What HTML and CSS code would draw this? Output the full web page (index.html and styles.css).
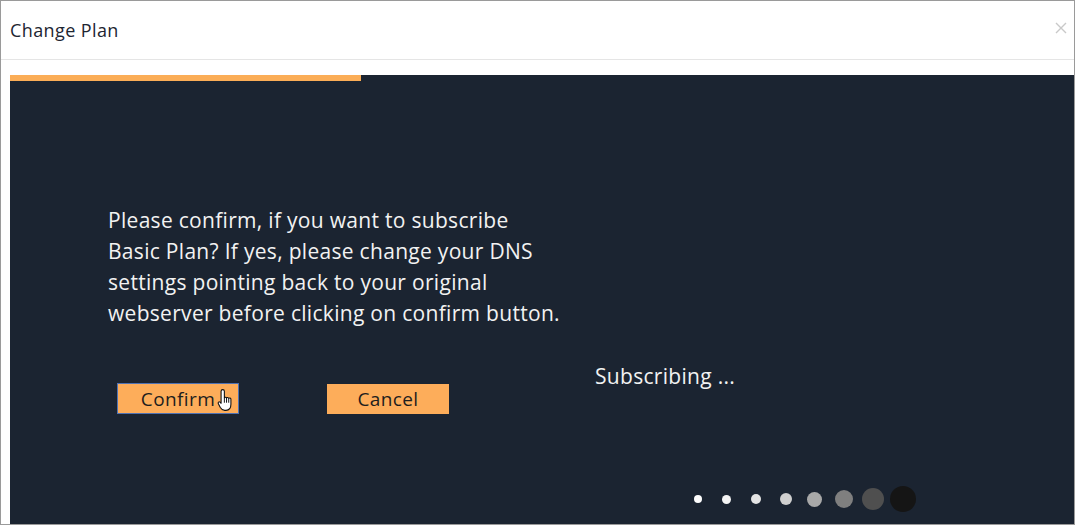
FILE: index.html
```html
<!DOCTYPE html>
<html lang="en">
  <head>
    <meta charset="UTF-8" />
    <meta name="viewport" content="width=device-width, initial-scale=1.0" />
    <title>Change Plan</title>
    <link rel="stylesheet" href="styles.css">
  </head>
  <body>
    <div class="modal">
      <header class="modal-header">
        <h4>Change Plan</h4>
        <button class="close" aria-label="Close">
          <svg width="12" height="12" viewBox="0 0 12 12">
            <path d="M1 1 L11 11 M11 1 L1 11" stroke="#c9c9c9" stroke-width="1.4" fill="none" />
          </svg>
        </button>
      </header>

      <div class="modal-body">
        <section class="panel">
          <div class="progress"></div>

          <div class="panel-content">
            <div class="message">
              <p>Please confirm, if you want to subscribe<br>
                Basic Plan? If yes, please change your DNS<br>
                settings pointing back to your original<br>
                webserver before clicking on confirm button.</p>

              <div class="actions">
                <button class="btn focused">
                  Confirm
                  <svg class="cursor" width="18" height="24" viewBox="0 0 16 22">
                    <path d="M5 1.5 C5.8 1.5 6.5 2.1 6.5 3 L6.5 9 C6.7 8.2 8.3 8.2 8.5 9.2 C8.8 8.4 10.3 8.4 10.5 9.6 C10.9 8.9 12.5 9.1 12.5 10.3 L12.5 15 C12.5 18 11 20.5 8 20.5 L6.8 20.5 C4.8 20.5 3.9 19.6 2.8 17.8 L0.9 14.2 C0.4 13.2 1.6 12.1 2.5 13 L3.5 14 L3.5 3 C3.5 2.1 4.2 1.5 5 1.5 Z" fill="#fff" stroke="#111" stroke-width="1" stroke-linejoin="round" />
                    <path d="M6.5 9 L6.5 13.5 M8.5 9.2 L8.5 13.5 M10.5 9.6 L10.5 13.5" stroke="#111" stroke-width="0.9" fill="none" />
                  </svg>
                </button>
                <button class="btn">Cancel</button>
              </div>
            </div>

            <div class="status">
              <p>Subscribing ...</p>

              <ul class="loader">
                <li><span class="dot d1"></span></li>
                <li><span class="dot d2"></span></li>
                <li><span class="dot d3"></span></li>
                <li><span class="dot d4"></span></li>
                <li><span class="dot d5"></span></li>
                <li><span class="dot d6"></span></li>
                <li><span class="dot d7"></span></li>
                <li><span class="dot d8"></span></li>
              </ul>
            </div>
          </div>
        </section>
      </div>
    </div>
  </body>
</html>
```

FILE: styles.css
```css
body {
  margin: 0;
  font-family: "Open Sans", Lato, sans-serif;
  background: #fff;
}

.modal {
  height: 525px;
  box-sizing: border-box;
  border: 1px solid #9a9a9a;
  display: flex;
  flex-direction: column;
}

.modal-header {
  height: 58px;
  border-bottom: 1px solid #e5e5e5;
  display: flex;
  align-items: center;
  justify-content: space-between;
  padding: 0 7px 0 9px;

  h4 {
    margin: 0;
    font-size: 18px;
    font-weight: 400;
    letter-spacing: 0.4px;
    color: #1d2532;
  }

  .close {
    border: 0;
    background: none;
    padding: 0;
    margin-top: -4px;
    display: flex;
  }
}

.modal-body {
  flex: 1;
  display: flex;
  padding: 15px 0 0 9px;
}

.panel {
  flex: 1;
  background: #1b2431;
  display: flex;
  flex-direction: column;
}

.progress {
  width: 351px;
  height: 6px;
  background: #fbad56;
}

.panel-content {
  display: flex;
  padding-left: 98px;
}

.message {
  width: 487px;
  padding-top: 124px;

  p {
    margin: 0;
    white-space: nowrap;
    font-size: 21px;
    letter-spacing: 0.3px;
    line-height: 31px;
    color: #f2f2f2;
  }
}

.actions {
  display: flex;
  align-items: flex-start;
  margin-top: 54px;
  padding-left: 9px;
}

.btn {
  position: relative;
  width: 122px;
  height: 30px;
  border: 0;
  padding: 0;
  background: #fdad5a;
  color: #1e1e1e;
  font-family: inherit;
  font-size: 19px;
  letter-spacing: 0.4px;

  &.focused {
    height: 31px;
    border: 1px solid #4f72b3;
  }

  & + .btn {
    margin-left: 88px;
    margin-top: 1px;
  }

  .cursor {
    position: absolute;
    left: 99px;
    top: 4px;
  }
}

.status {
  padding-top: 281px;

  p {
    margin: 0;
    font-size: 21px;
    letter-spacing: 0.3px;
    line-height: 28px;
    color: #f2f2f2;
  }
}

.loader {
  display: flex;
  align-items: center;
  list-style: none;
  padding: 0;
  margin: 96px 0 0 88px;

  li {
    width: 29.3px;
    height: 26px;
    display: flex;
    justify-content: center;
    align-items: center;
  }
}

.dot {
  border-radius: 50%;
}

.d1 { width: 8px; height: 8px; background: #fdfdfd; }
.d2 { width: 9px; height: 9px; background: #f4f4f4; }
.d3 { width: 10px; height: 10px; background: #e4e4e4; }
.d4 { width: 12px; height: 12px; background: #cfcfcf; }
.d5 { width: 15px; height: 15px; background: #a8a8a8; }
.d6 { width: 18px; height: 18px; background: #7f7f7f; }
.d7 { width: 22px; height: 22px; background: #4f4f4f; }
.d8 { width: 26px; height: 26px; background: #151515; }
```
